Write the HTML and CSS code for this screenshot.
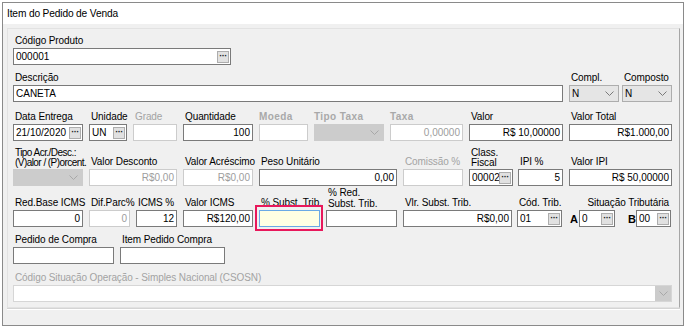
FILE: index.html
```html
<!DOCTYPE html>
<html lang="pt">
<head>
	<meta charset="UTF-8">
	<title>Item do Pedido de Venda</title>
	<link rel="stylesheet" href="styles.css">
</head>
<body>
	<div class="win">
	<div class="title">Item do Pedido de Venda</div>
	<div class="body">
	<div class="group">
		<div class="row">
			<div class="f w218"><div class="lb">Código Produto</div><div class="ed"><span class="v">000001</span><span class="bt">···</span></div></div>
		</div>
		<div class="row rb">
			<div class="f w550"><div class="lb">Descrição</div><div class="ed"><span class="v">CANETA</span></div></div>
			<div class="f w50"><div class="lb">Compl.</div><div class="cb"><span class="v">N</span><svg class="ar" width="9" height="5" viewBox="0 0 9 5"><polyline points="0.5,0.5 4.5,4.5 8.5,0.5" fill="none" stroke="#7a7a7a"/></svg></div></div>
			<div class="f w50 g3"><div class="lb">Composto</div><div class="cb"><span class="v">N</span><svg class="ar" width="9" height="5" viewBox="0 0 9 5"><polyline points="0.5,0.5 4.5,4.5 8.5,0.5" fill="none" stroke="#7a7a7a"/></svg></div></div>
		</div>
		<div class="row rc">
			<div class="f w70"><div class="lb">Data Entrega</div><div class="ed"><span class="v">21/10/2020</span><span class="bt">···</span></div></div>
			<div class="f w38"><div class="lb">Unidade</div><div class="ed"><span class="v">UN</span><span class="bt">···</span></div></div>
			<div class="f w44"><div class="lb off">Grade</div><div class="ed dis"></div></div>
			<div class="f w70"><div class="lb">Quantidade</div><div class="ed r"><span class="v">100</span></div></div>
			<div class="f w49"><div class="lb emb">Moeda</div><div class="ed dis"></div></div>
			<div class="f w70"><div class="lb emb">Tipo Taxa</div><div class="cb dis"><span class="v"></span><svg class="ar" width="9" height="5" viewBox="0 0 9 5"><polyline points="0.5,0.5 4.5,4.5 8.5,0.5" fill="none" stroke="#a8a8a8"/></svg></div></div>
			<div class="f w73"><div class="lb emb">Taxa</div><div class="ed dis r"><span class="v">0,00000</span></div></div>
			<div class="f w94"><div class="lb">Valor</div><div class="ed r"><span class="v">R$ 10,00000</span></div></div>
			<div class="f w103"><div class="lb">Valor Total</div><div class="ed r"><span class="v">R$1.000,00</span></div></div>
		</div>
		<div class="row rd">
			<div class="f w70"><div class="lb l2 tight">Tipo Acr./Desc.:<br>(V)alor / (P)orcent.</div><div class="cb dis"><span class="v"></span><svg class="ar" width="9" height="5" viewBox="0 0 9 5"><polyline points="0.5,0.5 4.5,4.5 8.5,0.5" fill="none" stroke="#a8a8a8"/></svg></div></div>
			<div class="f w88"><div class="lb">Valor Desconto</div><div class="ed dis r"><span class="v">R$0,00</span></div></div>
			<div class="f w70"><div class="lb">Valor Acréscimo</div><div class="ed dis r"><span class="v">R$0,00</span></div></div>
			<div class="f w138"><div class="lb">Peso Unitário</div><div class="ed r"><span class="v">0,00</span></div></div>
			<div class="f w60"><div class="lb off">Comissão %</div><div class="ed dis"></div></div>
			<div class="f w44"><div class="lb l2">Class.<br>Fiscal</div><div class="ed"><span class="v">00002</span><span class="bt">···</span></div></div>
			<div class="f w45 g5"><div class="lb">IPI %</div><div class="ed r"><span class="v">5</span></div></div>
			<div class="f w103"><div class="lb">Valor IPI</div><div class="ed r"><span class="v">R$ 50,00000</span></div></div>
		</div>
		<div class="row re">
			<div class="f w70"><div class="lb">Red.Base ICMS</div><div class="ed r"><span class="v">0</span></div></div>
			<div class="f w41"><div class="lb">Dif.Parc%</div><div class="ed dis r"><span class="v">0</span></div></div>
			<div class="f w41"><div class="lb">ICMS %</div><div class="ed r"><span class="v">12</span></div></div>
			<div class="f w70"><div class="lb">Valor ICMS</div><div class="ed r"><span class="v">R$120,00</span></div></div>
			<div class="f w61 hl"><div class="lb">% Subst. Trib.</div><div class="ed foc"></div></div>
			<div class="f w71"><div class="lb l3">% Red.<br>Subst. Trib.</div><div class="ed"></div></div>
			<div class="f w109"><div class="lb">Vlr. Subst. Trib.</div><div class="ed r"><span class="v">R$0,00</span></div></div>
			<div class="f w45 g5"><div class="lb">Cód. Trib.</div><div class="ed"><span class="v">01</span><span class="bt">···</span></div></div>
			<div class="f w103 sit">
				<div class="lb">Situação Tributária</div>
				<div class="sitrow">
					<span class="let">A</span><div class="ed w36"><span class="v">0</span><span class="bt">···</span></div>
					<span class="let lb2">B</span><div class="ed w35"><span class="v">00</span><span class="bt">···</span></div>
				</div>
			</div>
		</div>
		<div class="row rf">
			<div class="f w101"><div class="lb">Pedido de Compra</div><div class="ed"></div></div>
			<div class="f w105"><div class="lb">Item Pedido Compra</div><div class="ed"></div></div>
		</div>
		<div class="row rg">
			<div class="f w659"><div class="lb off">Código Situação Operação - Simples Nacional (CSOSN)</div><div class="cb cs"><span class="v"></span><span class="arb"><svg width="9" height="5" viewBox="0 0 9 5"><polyline points="0.5,0.5 4.5,4.5 8.5,0.5" fill="none" stroke="#a8a8a8"/></svg></span></div></div>
		</div>
	</div>
	<div class="foot"></div>
	</div>
	</div>
</body>
</html>
```

FILE: styles.css
```css
html,body{
	margin: 0px;
	padding: 0px;
	background: #fff;
}
body{
	font-family: "Liberation Sans", Arial, sans-serif;
	font-size: 10px;
	color: #000;
}
.win{
	margin: 2px;
	width: 682px;
	height: 324px;
	box-sizing: border-box;
	border: 1px solid #8a8a8a;
	background: #f0f0f0;
	display: flex;
	flex-direction: column;
}
.title{
	height: 21px;
	line-height: 21px;
	background: #fff;
	padding-left: 4px;
	letter-spacing: -0.15px;
	font-size: 10.2px;
}
.body{
	flex: 1;
	padding: 4px 3px 0px 4px;
	display: flex;
	flex-direction: column;
}
.group{
	border: 1px solid #e2e2e2;
	border-right-color: #a6a6a6;
	padding: 6px 0px 5px 5px;
}
.foot{
	flex: 1;
	border-top: 1px solid #d4d4d4;
	box-shadow: inset 0 1px 0 #fff;
}
.row{display: flex; gap: 6px; align-items: flex-end;}
.rb{margin-top: 7px;}
.rc{margin-top: 9px;}
.rd{margin-top: 7px;}
.re{margin-top: 1px;}
.rf{margin-top: 7px;}
.rg{margin-top: 8px;}
.g3{margin-left: -3px;}
.g5{margin-left: -1px;}

.f{display: flex; flex-direction: column; position: relative; flex: none;}
.lb{
	line-height: 12px;
	margin-bottom: 1px;
	white-space: nowrap;
	padding-left: 2px;
	letter-spacing: -0.1px;
}
.l2{line-height: 10px;}
.l3{line-height: 11px;}
.tight{letter-spacing: -0.55px;}
.off{color: #a3a3a3;}
.emb{color: #a9a9a9; font-weight: bold; letter-spacing: 0.4px; padding-left: 0px;}

.ed, .cb{
	height: 17px;
	box-sizing: border-box;
	border: 1px solid #7a7a7a;
	background: #fff;
	display: flex;
	align-items: center;
	padding: 0px 1px 0px 2px;
	line-height: 15px;
	white-space: nowrap;
}
.ed .v, .cb .v{flex: 1; overflow: hidden;}
.r .v{text-align: right; padding-right: 1px;}
.dis{border-color: #cccccc; color: #9d9d9d;}
.foc{border-color: #6aa9e6; background: #ffffe3;}
.bt{
	width: 12px;
	height: 12px;
	flex: none;
	box-sizing: border-box;
	border: 1px solid #adadad;
	background: #e1e1e1;
	font-size: 9px;
	font-weight: bold;
	line-height: 8px;
	text-align: center;
	letter-spacing: -0.5px;
	color: #222;
}
.cb{background: #e5e5e5; border-color: #adadad; padding-right: 4px;}
.cb.dis{background: #cccccc; border-color: #cccccc;}
.cb.cs{background: #fff; border-color: #d6d6d6; padding: 0px;}
.arb{
	width: 16px;
	height: 15px;
	background: #cccccc;
	display: flex;
	align-items: center;
	justify-content: center;
}

.hl::after{
	content: "";
	position: absolute;
	left: -4px;
	right: -3px;
	top: 8px;
	bottom: -4px;
	border: 2px solid #e8185b;
}
.sit .lb{text-align: right; padding-right: 2px;}
.sitrow{display: flex; align-items: center; padding-left: 2px;}
.sitrow .ed{flex: none;}
.let{font-weight: bold; font-size: 11px; width: 9px; flex: none;}
.let.lb2{margin-left: 13px; width: 8px;}

.w35{width: 35px;}
.w36{width: 36px;}
.w38{width: 38px;}
.w41{width: 41px;}
.w44{width: 44px;}
.w45{width: 45px;}
.w49{width: 49px;}
.w50{width: 50px;}
.w60{width: 60px;}
.w61{width: 61px;}
.w70{width: 70px;}
.w71{width: 71px;}
.w73{width: 73px;}
.w88{width: 88px;}
.w94{width: 94px;}
.w101{width: 101px;}
.w103{width: 103px;}
.w105{width: 105px;}
.w109{width: 109px;}
.w138{width: 138px;}
.w218{width: 218px;}
.w550{width: 550px;}
.w659{width: 659px;}
```
